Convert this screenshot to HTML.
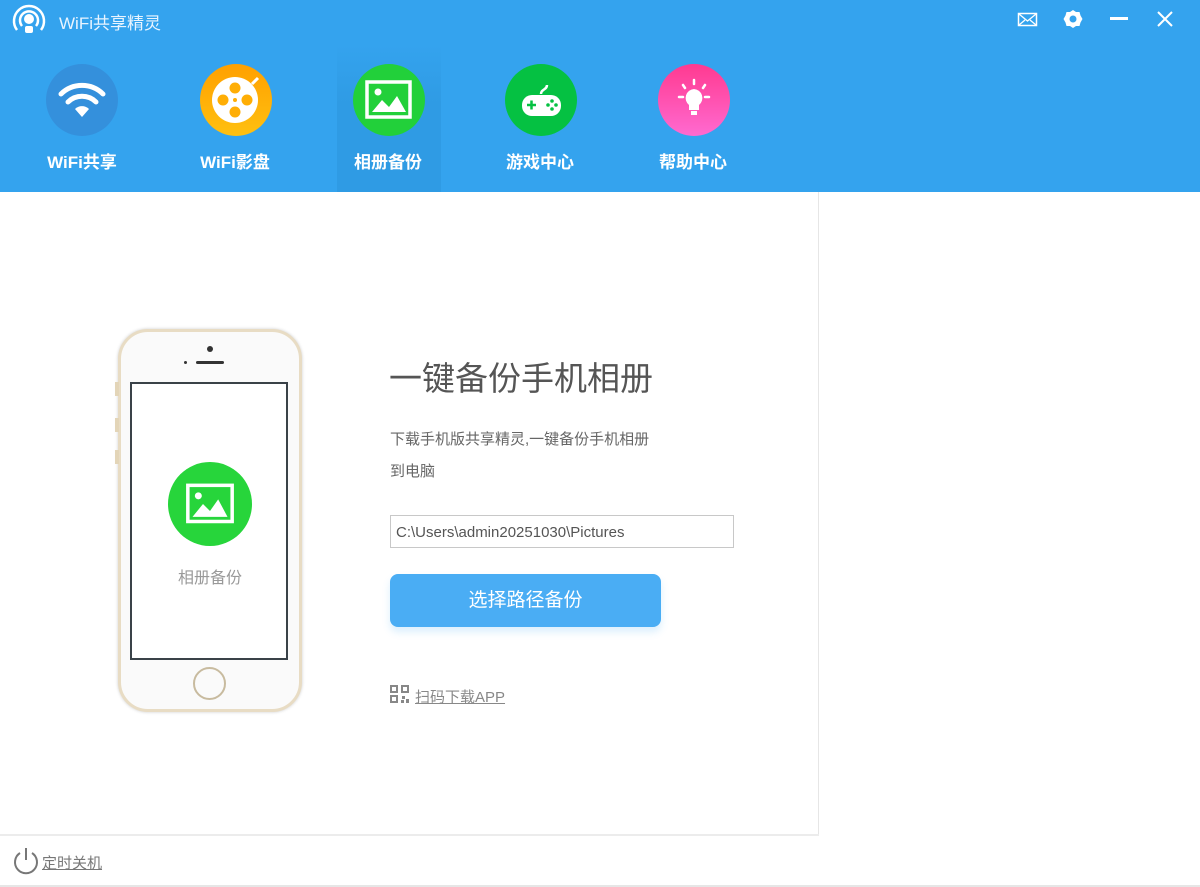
<!DOCTYPE html>
<html><head><meta charset="utf-8"><style>
*{margin:0;padding:0;box-sizing:border-box}
body{width:1200px;height:887px;overflow:hidden;background:#fff;font-family:"Liberation Sans","Noto Sans CJK SC",sans-serif;position:relative}
.hd{position:absolute;left:0;top:0;width:1200px;height:192px;background:#34a3ee}
.abs{position:absolute}
.tab{position:absolute;top:64px;width:72px;height:72px;border-radius:50%}
.lbl{position:absolute;top:148px;width:120px;text-align:center;color:#fff;font-size:17px;font-weight:bold}
.t{color:#666}
</style></head><body>
<div class="hd"></div>
<div class="abs" style="left:337px;top:45px;width:104px;height:147px;background:linear-gradient(rgba(40,150,225,0),#2f9be4 40%)"></div>
<!-- logo -->
<svg class="abs" style="left:10px;top:2px" width="38" height="36" viewBox="0 0 38 36"><g fill="none" stroke="#fff" stroke-width="2.5"><path d="M7 28A15 15 0 1 1 31 28"/><path d="M12 24A9 9 0 1 1 26 24"/></g><circle cx="19" cy="17" r="5" fill="#fff"/><rect x="15" y="24" width="8" height="7" rx="2" fill="#fff"/></svg>
<div class="abs" style="left:59px;top:9px;color:#e8f4ff;font-size:17px">WiFi共享精灵</div>
<!-- window icons -->
<svg class="abs" style="left:1017px;top:11px" width="22" height="16"><rect x="1.5" y="2.5" width="18" height="12" fill="none" stroke="#fff" stroke-width="1.5"/><path d="M2 3l8.5 7 8.5-7M2 14l6-5M19 14l-6-5" fill="none" stroke="#fff" stroke-width="1.3"/></svg>
<svg class="abs" style="left:1063px;top:9px" width="20" height="20" viewBox="0 0 20 20"><path d="M10 1l3 2 3.5 0 1 3.5 2 3.5-2 3.5-1 3.5-3.5 0-3 2-3-2-3.5 0-1-3.5L0.5 10l2-3.5 1-3.5 3.5 0z" fill="#fff"/><circle cx="10" cy="10" r="3.5" fill="#34a3ee"/></svg>
<div class="abs" style="left:1110px;top:17px;width:18px;height:3px;background:#fff"></div>
<svg class="abs" style="left:1156px;top:10px" width="18" height="18"><path d="M2 2l14 14M16 2L2 16" stroke="#fff" stroke-width="2"/></svg>
<!-- tabs -->
<div class="tab" style="left:46px;background:#3490dc"></div>
<svg class="abs" style="left:46px;top:64px" width="72" height="72" viewBox="0 0 72 72"><g fill="none" stroke="#fff" stroke-width="5" stroke-linecap="round"><path d="M15 30a30 30 0 0 1 42 0"/><path d="M22 38a20 20 0 0 1 28 0"/></g><path d="M29 45l7 8 7-8a10 10 0 0 0-14 0z" fill="#fff"/></svg>
<div class="lbl" style="left:22px">WiFi共享</div>
<div class="tab" style="left:200px;background:linear-gradient(#ffa000,#ffc010)"></div>
<svg class="abs" style="left:200px;top:64px" width="72" height="72" viewBox="0 0 72 72"><circle cx="35" cy="36" r="23" fill="#fff"/><path d="M52 20l6-6" stroke="#fff" stroke-width="3"/><g fill="#ffae05"><circle cx="35" cy="24" r="5.5"/><circle cx="35" cy="48" r="5.5"/><circle cx="23" cy="36" r="5.5"/><circle cx="47" cy="36" r="5.5"/><circle cx="35" cy="36" r="2"/></g></svg>
<div class="lbl" style="left:175px">WiFi影盘</div>
<div class="tab" style="left:353px;background:#22d03a"></div>
<svg class="abs" style="left:353px;top:64px" width="72" height="72" viewBox="0 0 72 72"><rect x="14" y="18" width="43" height="35" fill="none" stroke="#fff" stroke-width="3.5"/><circle cx="25" cy="28" r="3.5" fill="#fff"/><path d="M19 48l10-12 7 7 8-11 9 16z" fill="#fff"/></svg>
<div class="lbl" style="left:328px">相册备份</div>
<div class="tab" style="left:505px;background:#05c142"></div>
<svg class="abs" style="left:505px;top:64px" width="72" height="72" viewBox="0 0 72 72"><path d="M36 30c0-5 6-4 6-9" fill="none" stroke="#fff" stroke-width="2.5"/><rect x="17" y="31" width="39" height="21" rx="10" fill="#fff"/><path d="M22 41h9M26.5 36.5v9" stroke="#05c142" stroke-width="2.5"/><g fill="#05c142"><circle cx="47" cy="37" r="1.8"/><circle cx="47" cy="45" r="1.8"/><circle cx="43" cy="41" r="1.8"/><circle cx="51" cy="41" r="1.8"/></g></svg>
<div class="lbl" style="left:480px">游戏中心</div>
<div class="tab" style="left:658px;background:linear-gradient(#ff3a90,#ff6ad0)"></div>
<svg class="abs" style="left:658px;top:64px" width="72" height="72" viewBox="0 0 72 72"><path d="M36 25a9 9 0 0 0-5 16v5h10v-5a9 9 0 0 0-5-16z" fill="#fff"/><rect x="33" y="47" width="6" height="4" fill="#fff"/><g stroke="#fff" stroke-width="2.5" stroke-linecap="round"><path d="M36 16v4M25 21l2 3M47 21l-2 3M21 33h4M47 33h4"/></g></svg>
<div class="lbl" style="left:633px">帮助中心</div>
<!-- divider lines -->
<div class="abs" style="left:818px;top:192px;width:1px;height:643px;background:#e6e6e6"></div>
<div class="abs" style="left:0;top:834px;width:819px;height:2px;background:#ececec"></div>
<div class="abs" style="left:0;top:885px;width:1200px;height:2px;background:#e6e6e6"></div>
<!-- phone -->
<div class="abs" style="left:118px;top:329px;width:184px;height:383px;border-radius:30px;border:3px solid #e8dcc4;background:#fafafa;box-shadow:0 0 3px #ccc"></div>
<div class="abs" style="left:115px;top:382px;width:4px;height:14px;background:#e3d5b8"></div>
<div class="abs" style="left:115px;top:418px;width:4px;height:14px;background:#e3d5b8"></div>
<div class="abs" style="left:115px;top:450px;width:4px;height:14px;background:#e3d5b8"></div>
<div class="abs" style="left:207px;top:346px;width:6px;height:6px;border-radius:50%;background:#333"></div>
<div class="abs" style="left:184px;top:361px;width:3px;height:3px;border-radius:50%;background:#333"></div>
<div class="abs" style="left:196px;top:361px;width:28px;height:3px;border-radius:2px;background:#333"></div>
<div class="abs" style="left:130px;top:382px;width:158px;height:278px;background:#fff;border:2px solid #3a4248"></div>
<div class="abs" style="left:193px;top:667px;width:33px;height:33px;border-radius:50%;border:2px solid #c8bb9f"></div>
<div class="abs" style="left:168px;top:462px;width:84px;height:84px;border-radius:50%;background:#27d53b"></div>
<svg class="abs" style="left:168px;top:462px" width="84" height="84" viewBox="0 0 72 72"><rect x="17" y="20" width="38" height="31" fill="none" stroke="#fff" stroke-width="3"/><circle cx="26" cy="29" r="3" fill="#fff"/><path d="M21 47l9-11 6 6 7-10 8 15z" fill="#fff"/></svg>
<div class="abs" style="left:160px;top:564px;width:100px;text-align:center;color:#999;font-size:16px">相册备份</div>
<!-- right content -->
<div class="abs t" style="left:389px;top:352px;font-size:33px;color:#555">一键备份手机相册</div>
<div class="abs t" style="left:390px;top:424px;font-size:15px;line-height:32px">下载手机版共享精灵,一键备份手机相册<br>到电脑</div>
<div class="abs" style="left:390px;top:515px;width:344px;height:33px;border:1px solid #c8c8c8;color:#555;font-size:15px;padding:8px 0 0 5px">C:\Users\admin20251030\Pictures</div>
<div class="abs" style="left:390px;top:574px;width:271px;height:53px;border-radius:8px;background:#4aadf4;color:#fff;font-size:19px;text-align:center;line-height:53px;box-shadow:0 5px 8px rgba(74,173,244,0.2)">选择路径备份</div>
<svg class="abs" style="left:389px;top:684px" width="22" height="20" viewBox="0 0 22 20"><g fill="#888"><rect x="1" y="1" width="8" height="8"/><rect x="12" y="1" width="8" height="8"/><rect x="1" y="11" width="8" height="8"/><rect x="13" y="12" width="3" height="3"/><rect x="17" y="15" width="3" height="4"/><rect x="12" y="16" width="3" height="3"/></g><g fill="#fff"><rect x="3" y="3" width="4" height="4"/><rect x="14" y="3" width="4" height="4"/><rect x="3" y="13" width="4" height="4"/></g></svg>
<div class="abs" style="left:415px;top:686px;font-size:15px;color:#888;text-decoration:underline">扫码下载APP</div>
<!-- footer -->
<svg class="abs" style="left:10px;top:845px" width="32" height="32" viewBox="0 0 32 32"><path d="M10 8A11 11 0 1 0 22 8" fill="none" stroke="#777" stroke-width="2"/><path d="M16 3v12" stroke="#777" stroke-width="2"/></svg>
<div class="abs" style="left:42px;top:852px;font-size:15px;color:#777;text-decoration:underline">定时关机</div>
</body></html>
